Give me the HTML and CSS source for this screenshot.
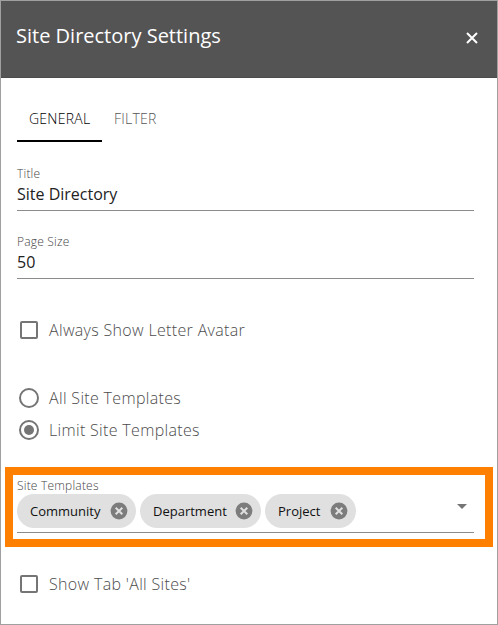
FILE: index.html
```html
<!DOCTYPE html>
<html lang="en">
<head>
<meta charset="utf-8">
<title>Site Directory Settings</title>
<link rel="stylesheet" href="styles.css">
</head>
<body>
<main class="panel">
  <header class="header">
    <h1 class="title">Site Directory Settings</h1>
    <svg class="close" width="12" height="12" viewBox="0 0 12 12"><path d="M1 1l10 10M11 1L1 11"/></svg>
  </header>
  <nav class="tabs">
    <a class="tab active">GENERAL</a>
    <a class="tab">FILTER</a>
  </nav>
  <div class="field">
    <label class="label">Title</label>
    <div class="value">Site Directory</div>
  </div>
  <div class="field page-size">
    <label class="label">Page Size</label>
    <div class="value">50</div>
  </div>
  <div class="option avatar"><i class="box"></i><span>Always Show Letter Avatar</span></div>
  <div class="option all"><i class="radio"></i><span>All Site Templates</span></div>
  <div class="option"><i class="radio checked"></i><span>Limit Site Templates</span></div>
  <section class="highlight">
    <div class="select">
      <label class="label">Site Templates</label>
      <div class="chips">
        <div class="chip community"><span>Community</span><svg width="18" height="18" viewBox="0 0 18 18"><circle cx="9" cy="9" r="8.4"/><path d="M5.7 5.7l6.6 6.6M12.3 5.7l-6.6 6.6"/></svg></div>
        <div class="chip department"><span>Department</span><svg width="18" height="18" viewBox="0 0 18 18"><circle cx="9" cy="9" r="8.4"/><path d="M5.7 5.7l6.6 6.6M12.3 5.7l-6.6 6.6"/></svg></div>
        <div class="chip project"><span>Project</span><svg width="18" height="18" viewBox="0 0 18 18"><circle cx="9" cy="9" r="8.4"/><path d="M5.7 5.7l6.6 6.6M12.3 5.7l-6.6 6.6"/></svg></div>
        <svg class="arrow" width="10" height="5" viewBox="0 0 10 5"><path d="M0 0h10L5 5z"/></svg>
      </div>
    </div>
  </section>
  <div class="option sites"><i class="box"></i><span>Show Tab 'All Sites'</span></div>
</main>
</body>
</html>
```
FILE: styles.css
```css
* { box-sizing: border-box; }
body { margin: 0; background: #fff; font-family: "Open Sans", sans-serif; color: #222; }
.panel { width: 498px; height: 625px; border: 1px solid #a0a0a0; overflow: hidden; }
.header { height: 77px; background: #545454; border-bottom: 1px solid #4c4c4c; display: flex; justify-content: space-between; align-items: flex-start; padding: 21px 19px 0 15px; }
.title { margin: 0; font-size: 20px; font-weight: 400; line-height: 28px; color: #fff; white-space: nowrap; }
.close { margin-top: 10px; fill: none; stroke: #fff; stroke-width: 2; }
.tabs { display: flex; height: 48px; margin: 16px 16px 0; }
.tab { height: 48px; padding: 0 12px; font-size: 14px; line-height: 50px; letter-spacing: .25px; color: #555; font-weight: 300; white-space: nowrap; }
.tab.active { width: 85px; color: #000; border-bottom: 2px solid #000; }
.field { width: 457px; height: 45px; margin: 24px 0 0 16px; border-bottom: 1px solid #8c8c8c; }
.page-size { margin-top: 23px; }
.label { display: block; height: 16px; font-size: 12px; line-height: 16px; letter-spacing: .2px; font-weight: 300; color: #444; white-space: nowrap; }
.value { font-size: 16px; line-height: 24px; white-space: nowrap; }
.option { display: flex; align-items: center; height: 32px; padding-left: 18px; font-size: 16px; line-height: 24px; letter-spacing: .33px; font-weight: 300; color: #4c4c4c; white-space: nowrap; }
.box { width: 18px; height: 18px; margin: 0 11px 0 1px; border: 2px solid #757575; border-radius: 2px; }
.radio { display: grid; place-items: center; width: 20px; height: 20px; margin-right: 10px; border: 2px solid #757575; border-radius: 50%; }
.checked::before { content: ""; width: 10px; height: 10px; border-radius: 50%; background: #757575; }
.avatar { margin-top: 35px; }
.all { margin-top: 36px; }
.highlight { width: 488px; height: 80px; margin: 21px 0 0 4px; padding: 3px 11px 0 4px; border: 8px solid #ff8000; }
.select { width: 457px; height: 55px; border-bottom: 1px solid #8c8c8c; }
.chips { display: flex; gap: 4px; }
.chip { display: flex; align-items: center; justify-content: space-between; height: 34px; padding: 0 8px 0 13px; border-radius: 17px; background: #e0e0e0; font-size: 13px; color: #111; white-space: nowrap; }
.community { width: 119px; }
.department { width: 121px; }
.project { width: 91px; }
.chip circle { fill: #7c7c7c; }
.chip path { fill: none; stroke: #e0e0e0; stroke-width: 2; }
.arrow { margin: 10px 7px 0 auto; fill: #757575; }
.sites { margin-top: 21px; }
```
